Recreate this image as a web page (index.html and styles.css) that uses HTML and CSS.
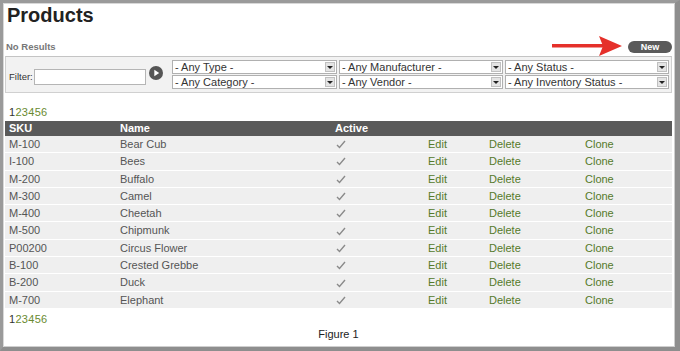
FILE: index.html
```html
<!DOCTYPE html>
<html lang="en">
<head>
    <meta charset="UTF-8">
    <title>Products</title>
    <link rel="stylesheet" href="styles.css">
</head>
<body>
    <div class="frame">
        <div class="title">Products</div>
        <div class="toolbar">
            <div class="no-results">No Results</div>
            <div class="toolbar-right">
                <svg class="arrow" width="70" height="22" viewBox="0 0 70 22">
                    <rect x="0" y="9" width="52" height="3.5" fill="#e5302a"/>
                    <polygon points="47,1 70,11 47,21 51,11" fill="#e5302a"/>
                </svg>
                <span class="new-button">New</span>
            </div>
        </div>
        <div class="filter-box">
            <div class="filter-left">
                <label class="filter-label">Filter:</label>
                <input type="text" class="filter-input">
                <svg class="go" width="14" height="14" viewBox="0 0 14 14">
                    <circle cx="7" cy="7" r="7" fill="#555"/>
                    <polygon points="5.3,3.8 10.2,7 5.3,10.2" fill="#fff"/>
                </svg>
            </div>
            <div class="selects">
                <div class="select">- Any Type -<span class="drop"></span></div>
                <div class="select">- Any Manufacturer -<span class="drop"></span></div>
                <div class="select">- Any Status -<span class="drop"></span></div>
                <div class="select">- Any Category -<span class="drop"></span></div>
                <div class="select">- Any Vendor -<span class="drop"></span></div>
                <div class="select">- Any Inventory Status -<span class="drop"></span></div>
            </div>
        </div>
        <div class="pager top"><span>1</span><a>2</a><a>3</a><a>4</a><a>5</a><a>6</a></div>
        <table class="products">
            <colgroup>
                <col style="width:111px">
                <col style="width:215px">
                <col style="width:93px">
                <col style="width:61px">
                <col style="width:96px">
                <col>
            </colgroup>
            <thead>
                <tr><th>SKU</th><th>Name</th><th>Active</th><th></th><th></th><th></th></tr>
            </thead>
            <tbody id="rows"></tbody>
        </table>
        <div class="pager bottom"><span>1</span><a>2</a><a>3</a><a>4</a><a>5</a><a>6</a></div>
        <div class="caption">Figure 1</div>
    </div>
    <script>
        var products = [
            ['M-100', 'Bear Cub'],
            ['I-100', 'Bees'],
            ['M-200', 'Buffalo'],
            ['M-300', 'Camel'],
            ['M-400', 'Cheetah'],
            ['M-500', 'Chipmunk'],
            ['P00200', 'Circus Flower'],
            ['B-100', 'Crested Grebbe'],
            ['B-200', 'Duck'],
            ['M-700', 'Elephant']
        ];
        var check = '<svg class="check" width="12" height="11" viewBox="0 0 12 11"><path d="M2 6 L4.5 8.5 L10 2" fill="none" stroke="#8a8a8a" stroke-width="1.4"/></svg>';
        document.getElementById('rows').innerHTML = products.map(function(p) {
            return '<tr><td>' + p[0] + '</td><td>' + p[1] + '</td><td>' + check +
                '</td><td><a>Edit</a></td><td><a>Delete</a></td><td><a>Clone</a></td></tr>';
        }).join('');
    </script>
</body>
</html>
```

FILE: styles.css
```css
body {
    margin: 0;
    font-family: 'Liberation Sans', Arial, sans-serif;
    background-color: #fff;
}

.frame {
    width: 680px;
    height: 351px;
    box-sizing: border-box;
    border-top: 3px solid #9a9a9a;
    border-left: 3px solid #9a9a9a;
    border-right: 5px solid #8e8e8e;
    border-bottom: 4px solid #8e8e8e;
    box-shadow: inset 1px 1px 0 #d8d8d8, inset -1px -1px 0 #cfcfcf;
    padding: 0 3px 0 2px;
    background-color: #fff;
}

.title {
    font-size: 20px;
    font-weight: 700;
    line-height: 24px;
    color: #222;
    padding-left: 2px;
}

.toolbar {
    display: flex;
    justify-content: space-between;
    align-items: center;
    height: 18px;
    margin-top: 11px;
}

.no-results {
    font-size: 9.5px;
    font-weight: 700;
    color: #777;
    padding-left: 1px;
    margin-top: -2px;
}

.toolbar-right {
    display: flex;
    align-items: center;
    gap: 6px;
}

.arrow {
    display: block;
    margin-top: -2px;
}

.new-button {
    display: block;
    width: 44px;
    height: 12px;
    line-height: 12px;
    border-radius: 6px;
    background-color: #5a5a5a;
    color: #fff;
    font-size: 9px;
    font-weight: 700;
    text-align: center;
}

.filter-box {
    display: flex;
    align-items: center;
    height: 37px;
    box-sizing: border-box;
    background-color: #f2f2f2;
    border: 1px solid #d0d0d0;
    border-top-color: #c4c4c4;
    padding: 0 1px 0 3px;
}

.filter-left {
    display: flex;
    align-items: center;
    width: 163px;
    margin-top: 4px;
}

.filter-label {
    font-size: 9.5px;
    color: #333;
    width: 25px;
}

.filter-input {
    width: 112px;
    height: 16px;
    box-sizing: border-box;
    border: 1px solid #b5b5b5;
    background-color: #fff;
    padding: 0;
    margin: 0;
}

.go {
    display: block;
    margin: -8px 0 0 3px;
}

.selects {
    flex: 1;
    display: grid;
    grid-template-columns: 165px 164px 164px;
    column-gap: 2px;
    row-gap: 1px;
}

.select {
    position: relative;
    height: 14px;
    box-sizing: border-box;
    border: 1px solid #b0b0b0;
    background-color: #fff;
    font-size: 11px;
    line-height: 12px;
    color: #333;
    padding-left: 2px;
    white-space: nowrap;
}

.drop {
    position: absolute;
    right: 1px;
    top: 1px;
    width: 8px;
    height: 8px;
    border: 1px solid #c0c0c0;
    background-color: #e4e4e4;
}

.drop::after {
    content: '';
    position: absolute;
    left: 1px;
    top: 3px;
    border-left: 3px solid transparent;
    border-right: 3px solid transparent;
    border-top: 3px solid #222;
}

.pager {
    font-size: 11px;
    line-height: 13px;
    padding-left: 4px;
    color: #333;
    letter-spacing: 0.3px;
}

.pager.top {
    margin-top: 13px;
    margin-bottom: 2px;
}

.pager.bottom {
    margin-top: 5px;
}

.pager a {
    color: #6a8a30;
}

.products {
    width: 667px;
    border-collapse: collapse;
    table-layout: fixed;
}

.products th {
    height: 15px;
    padding: 0 0 0 4px;
    background-color: #5a5a5a;
    color: #fff;
    font-size: 11px;
    font-weight: 700;
    text-align: left;
    line-height: 15px;
}

.products td {
    height: 16.3px;
    padding: 0 0 0 4px;
    background-color: #efefef;
    border-bottom: 1px solid #fff;
    font-size: 11px;
    line-height: 16.3px;
    color: #555;
}

.products tr:last-child td {
    border-bottom: none;
}

.products td a {
    color: #557a2a;
}

.check {
    display: block;
    margin-top: 1px;
}

.caption {
    margin-top: 2px;
    text-align: center;
    font-size: 11px;
    line-height: 13px;
    color: #222;
}
```
